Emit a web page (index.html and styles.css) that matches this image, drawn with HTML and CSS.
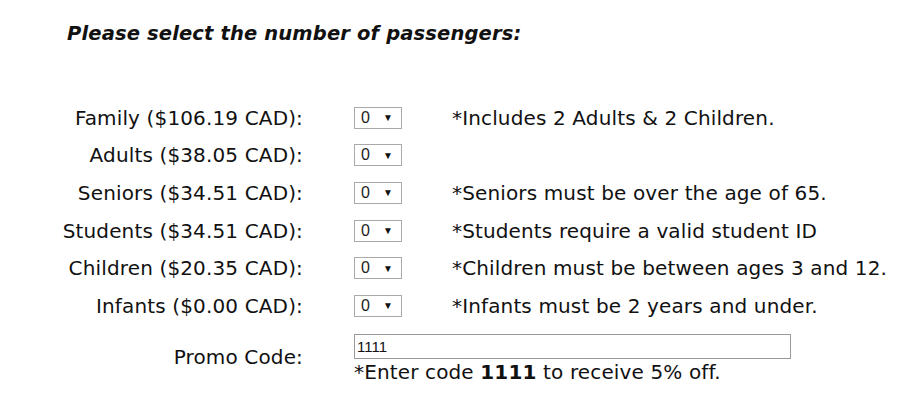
FILE: index.html
```html
<!DOCTYPE html>
<html>
<head>
<meta charset="utf-8">
<link rel="stylesheet" href="styles.css">
</head>
<body>
<div class="page">
  <h1 class="title">Please select the number of passengers:</h1>
  <table class="pax">
    <tr>
      <td class="label">Family ($106.19 CAD):</td>
      <td class="ctrl"><span class="sel"><span class="val">0</span><span class="arr">&#9660;</span></span></td>
      <td class="note">*Includes 2 Adults &amp; 2 Children.</td>
    </tr>
    <tr>
      <td class="label">Adults ($38.05 CAD):</td>
      <td class="ctrl"><span class="sel"><span class="val">0</span><span class="arr">&#9660;</span></span></td>
      <td class="note"></td>
    </tr>
    <tr>
      <td class="label">Seniors ($34.51 CAD):</td>
      <td class="ctrl"><span class="sel"><span class="val">0</span><span class="arr">&#9660;</span></span></td>
      <td class="note">*Seniors must be over the age of 65.</td>
    </tr>
    <tr>
      <td class="label">Students ($34.51 CAD):</td>
      <td class="ctrl"><span class="sel"><span class="val">0</span><span class="arr">&#9660;</span></span></td>
      <td class="note">*Students require a valid student ID</td>
    </tr>
    <tr>
      <td class="label">Children ($20.35 CAD):</td>
      <td class="ctrl"><span class="sel"><span class="val">0</span><span class="arr">&#9660;</span></span></td>
      <td class="note">*Children must be between ages 3 and 12.</td>
    </tr>
    <tr>
      <td class="label">Infants ($0.00 CAD):</td>
      <td class="ctrl"><span class="sel"><span class="val">0</span><span class="arr">&#9660;</span></span></td>
      <td class="note">*Infants must be 2 years and under.</td>
    </tr>
    <tr class="promo">
      <td class="label">Promo Code:</td>
      <td class="ctrl" colspan="2">
        <div class="promo-box">
          <span class="input">1111</span>
          <span class="hint">*Enter code <b>1111</b> to receive 5% off.</span>
        </div>
      </td>
    </tr>
  </table>
</div>
</body>
</html>
```
FILE: styles.css
```css
html, body {
  margin: 0;
  padding: 0;
  background: #ffffff;
}
body {
  font-family: "DejaVu Sans", Verdana, sans-serif;
  color: #111;
}
.page {
  padding: 20px 0 0 67px;
}
.title {
  margin: 0;
  font-size: 19.5px;
  font-weight: bold;
  font-style: italic;
  line-height: 28px;
  letter-spacing: 0.15px;
}
.pax {
  border-collapse: collapse;
  margin-top: 51px;
  margin-left: -9px;
}
.pax td {
  padding: 0;
  height: 37.6px;
  font-size: 20px;
  letter-spacing: 0.14px;
  vertical-align: middle;
  white-space: nowrap;
}
.label {
  text-align: right;
  width: 245px;
}
.pax td.ctrl {
  padding-left: 51px;
  width: 48px;
  letter-spacing: 0;
}
.pax td.note {
  padding-left: 50px;
}
.sel {
  display: flex;
  align-items: center;
  justify-content: space-between;
  box-sizing: border-box;
  width: 48px;
  height: 22px;
  border: 1px solid #a9a9a9;
  background: #fff;
  padding: 0 8px 0 6px;
  font-family: "Liberation Sans", Arial, sans-serif;
  font-size: 16px;
  color: #222;
}
.arr {
  font-size: 10px;
  color: #111;
}
.pax tr.promo td {
  height: 64px;
}
.promo-box {
  display: flex;
  flex-direction: column;
  align-items: flex-start;
  padding-top: 7px;
}
.input {
  box-sizing: border-box;
  width: 437px;
  height: 25px;
  border: 1px solid #9a9a9a;
  padding: 2px 2px;
  font-family: "Liberation Sans", Arial, sans-serif;
  font-size: 15px;
  line-height: 19px;
  color: #111;
}
.hint {
  font-size: 20px;
  line-height: 27px;
  letter-spacing: 0.14px;
}
```
